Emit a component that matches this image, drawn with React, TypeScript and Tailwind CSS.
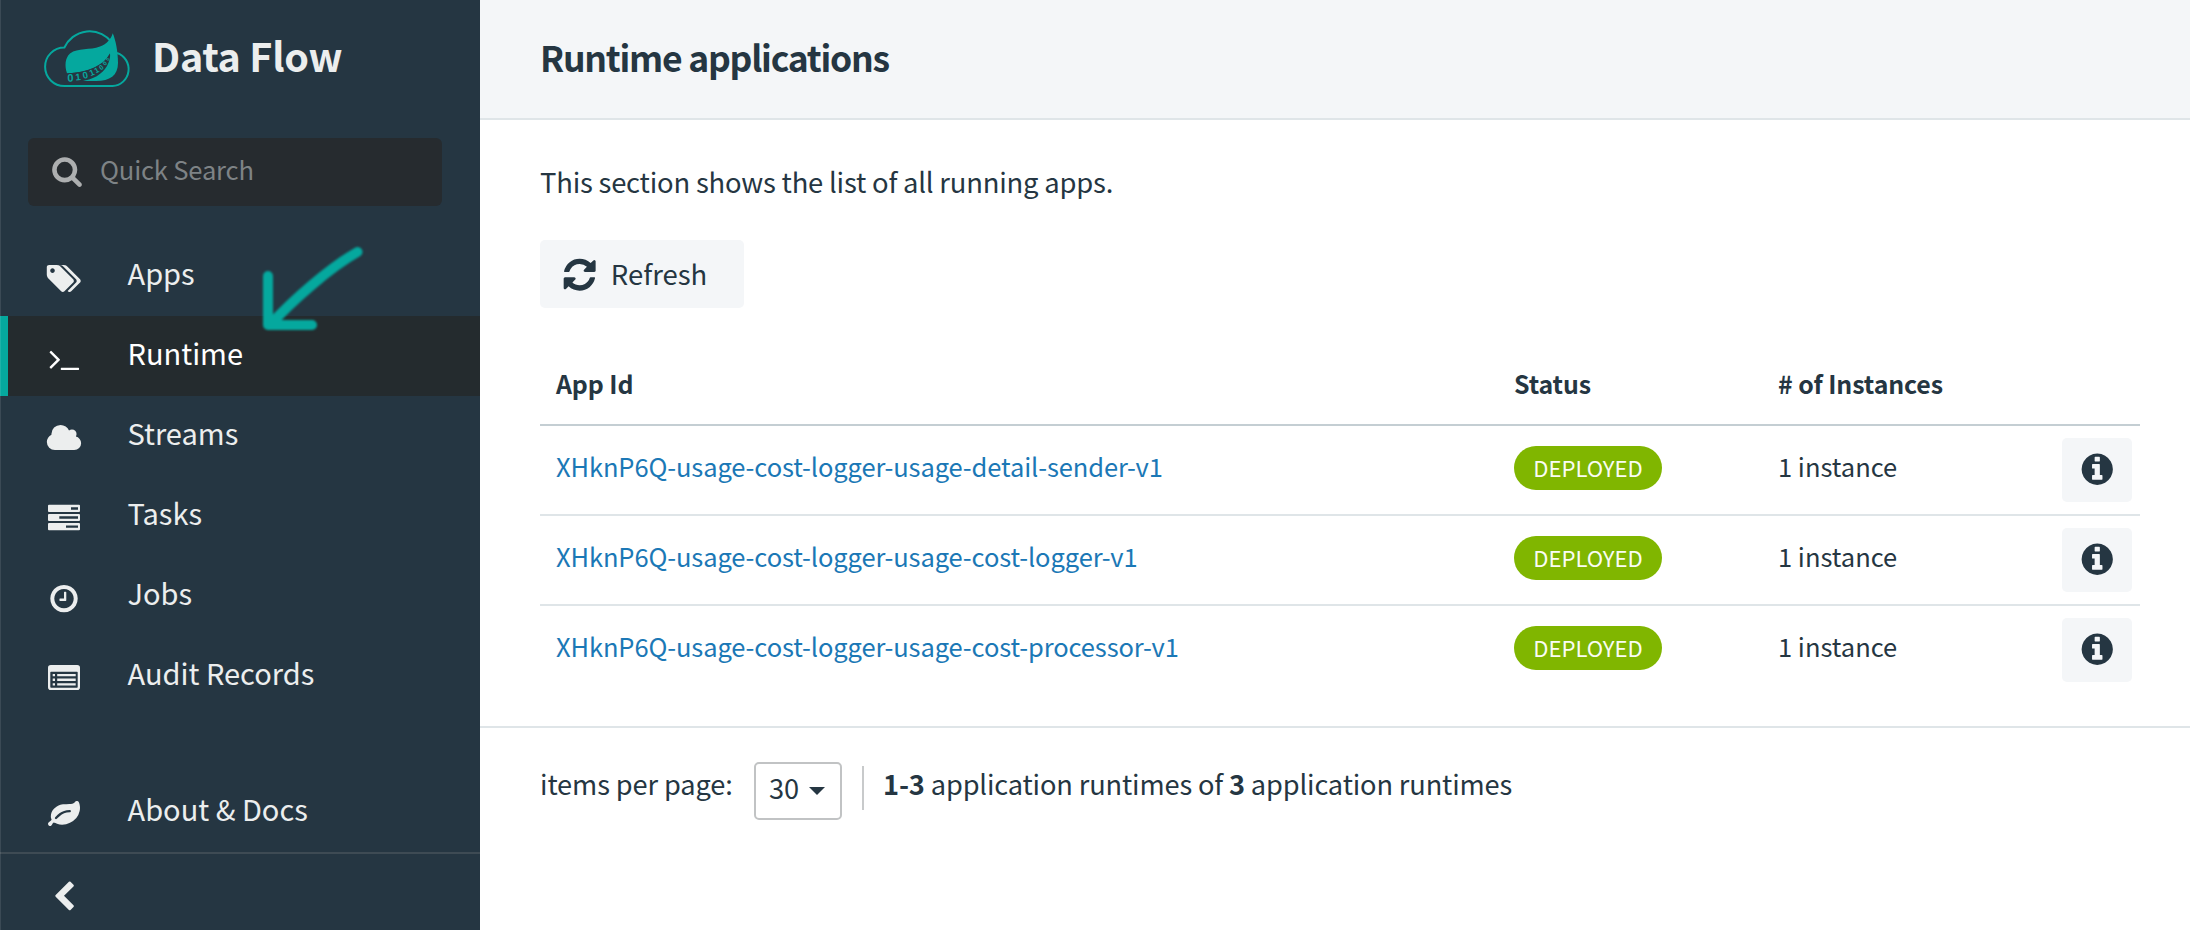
import type { ReactNode } from "react";

const TAGS =
  "M576 448q0-53-37.5-90.5t-90.5-37.5-90.5 37.5-37.5 90.5 37.5 90.5 90.5 37.5 90.5-37.5 37.5-90.5zm1067 576q0 53-37 90l-491 492q-39 37-91 37-53 0-90-37l-715-716q-38-37-64.5-101t-26.5-117v-416q0-52 38-90t90-38h416q53 0 117 26.5t102 64.5l715 714q37 39 37 91zm384 0q0 53-37 90l-491 492q-39 37-91 37-36 0-59-14t-53-45l470-470q37-37 37-90 0-52-37-91l-715-714q-38-38-102-64.5t-117-26.5h224q53 0 117 26.5t102 64.5l715 714q37 39 37 91z";
const TERMINAL =
  "M649 983l-466 466q-10 10-23 10t-23-10l-50-50q-10-10-10-23t10-23l393-393-393-393q-10-10-10-23t10-23l50-50q10-10 23-10t23 10l466 466q10 10 10 23t-10 23zm1079 457v64q0 14-9 23t-23 9h-960q-14 0-23-9t-9-23v-64q0-14 9-23t23-9h960q14 0 23 9t9 23z";
const CLOUD =
  "M1984 1152q0 159-112.5 271.5t-271.5 112.5h-1088q-185 0-316.5-131.5t-131.5-316.5q0-132 71-241.5t187-163.5q-2-28-2-43 0-212 150-362t362-150q158 0 286.5 88t187.5 230q70-62 166-62 106 0 181 75t75 181q0 75-41 138 129 30 213 134.5t84 239.5z";
const CLOCK =
  "M1024 544v448q0 14-9 23t-23 9h-320q-14 0-23-9t-9-23v-64q0-14 9-23t23-9h224v-352q0-14 9-23t23-9h64q14 0 23 9t9 23zm416 352q0-148-73-273t-198-198-273-73-273 73-198 198-73 273 73 273 198 198 273 73 273-73 198-198 73-273zm224 0q0 209-103 385.5t-279.5 279.5-385.5 103-385.5-103-279.5-279.5-103-385.5 103-385.5 279.5-279.5 385.5-103 385.5 103 279.5 279.5 103 385.5z";
const LEAF =
  "M1280 704q0-26-19-45t-45-19q-172 0-318 49.5t-259.5 134-235.5 219.5q-19 21-19 45 0 26 19 45t45 19q24 0 45-19 27-24 74-71t67-66q137-124 268.5-176t313.5-52q26 0 45-19t19-45zm512-198q0 95-20 193-46 224-184.5 383t-357.5 268q-214 108-438 108-148 0-286-47-15-5-88-42t-96-37q-16 0-39.5 32t-45 70-52.5 70-60 32q-43 0-63.5-17.5t-45.5-59.5q-2-4-6-11t-5.500-10-3-9.500-1.500-13.500q0-35 31-73.500t68-65.500 68-56 31-48q0-4-14-38t-16-44q-9-51-9-104 0-115 43.500-220t119-184.500 170.500-139 204-95.500q55-18 145-25.500t179.500-9 178.500-6 163.500-24 113.500-56.500l29.500-29.500 29.500-28 27-20 36.500-16 43.500-4.500q39 0 70.500 46t47.500 112 24 124 8 96z";
const CHEVRON_LEFT =
  "M1427 301l-531 531 531 531q19 19 19 45t-19 45l-166 166q-19 19-45 19t-45-19l-742-742q-19-19-19-45t19-45l742-742q19-19 45-19t45 19l166 166q19 19 19 45t-19 45z";
const SEARCH =
  "M1216 832q0-185-131.5-316.5t-316.5-131.5-316.5 131.5-131.5 316.5 131.5 316.5 316.5 131.5 316.5-131.5 131.5-316.5zm512 832q0 52-38 90t-90 38q-54 0-90-38l-343-342q-179 124-399 124-143 0-273.5-55.5t-225-150-150-225-55.5-273.5 55.5-273.5 150-225 225-150 273.5-55.5 273.5 55.5 225 150 150 225 55.5 273.5q0 220-124 399l343 343q37 37 37 90z";
const REFRESH =
  "M1639 1056q0 5-1 7-64 268-268 434.5t-478 166.5q-146 0-282.5-55t-243.5-157l-129 129q-19 19-45 19t-45-19-19-45v-448q0-26 19-45t45-19h448q26 0 45 19t19 45-19 45l-137 137q71 66 161 102t187 36q134 0 250-65t186-179q11-17 53-117 8-23 30-23h192q13 0 22.5 9.5t9.5 22.5zm25-800v448q0 26-19 45t-45 19h-448q-26 0-45-19t-19-45 19-45l138-138q-148-137-349-137-134 0-250 65t-186 179q-11 17-53 117-8 23-30 23h-199q-13 0-22.5-9.5t-9.5-22.5v-7q65-268 270-434.5t480-166.5q146 0 284 55.5t245 156.5l130-129q19-19 45-19t45 19 19 45z";
const INFO =
  "M1152 1376v-160q0-14-9-23t-23-9h-96v-512q0-14-9-23t-23-9h-320q-14 0-23 9t-9 23v160q0 14 9 23t23 9h96v320h-96q-14 0-23 9t-9 23v160q0 14 9 23t23 9h448q14 0 23-9t9-23zm-128-896v-160q0-14-9-23t-23-9h-192q-14 0-23 9t-9 23v160q0 14 9 23t23 9h192q14 0 23-9t9-23zm640 416q0 209-103 385.5t-279.5 279.5-385.5 103-385.5-103-279.5-279.5-103-385.5 103-385.5 279.5-279.5 385.5-103 385.5 103 279.5 279.5 103 385.5z";

function Glyph({ d, className }: { d: string; className: string }) {
  return (
    <svg viewBox="0 0 1792 1792" className={className} fill="currentColor">
      <path d={d} />
    </svg>
  );
}

function NavGlyph({ d, x }: { d: string; x: number }) {
  return <path d={d} transform={`translate(${x} 4.6) scale(0.017857)`} />;
}

const tasksIcon = (
  <path
    fillRule="evenodd"
    d="M7 6.7h30q1 0 1 1v5.3q0 1-1 1H7q-1 0-1-1V7.700q0-1 1-1zM29 9.200v2.500h7V9.200zM7 15.900h30q1 0 1 1v5.200q0 1-1 1H7q-1 0-1-1v-5.200q0-1 1-1zM17.300 18.300v2.400H36v-2.400zM7 25.100h30q1 0 1 1v5.200q0 1-1 1H7q-1 0-1-1v-5.200q0-1 1-1zM24 27.400v2.400h12v-2.400z"
  />
);

const listIcon = (
  <path
    fillRule="evenodd"
    d="M8.800 7h26.400q2.800 0 2.800 2.800v19.400q0 2.800-2.800 2.800H8.800Q6 32 6 29.200V9.800Q6 7 8.800 7zM9 13.700q-.7 0-.7.7v14.700q0 .7.7.7h26q.7 0 .7-.7V14.400q0-.7-.7-.7zM10.700 16H13v2.300h-2.300zM15.200 16H33.700v2.300H15.200zM10.700 20.600H13v2.300h-2.300zM15.200 20.600H33.700v2.300H15.200zM10.700 25.200H13v2.300h-2.300zM15.200 25.200H33.700v2.300H15.200z"
  />
);

function NavItem({ label, icon, active = false }: { label: string; icon: ReactNode; active?: boolean }) {
  return (
    <a
      className={
        active
          ? "flex h-20 items-center border-l-8 border-[#05a89e] bg-[#242b2e] pl-[34px] text-white"
          : "flex h-20 items-center pl-[42px] text-[#eceeee]"
      }
    >
      <svg viewBox="0 0 44 40" className="mt-1 h-10 w-11" fill="currentColor">
        {icon}
      </svg>
      <span className="ml-[41.500px] pb-[8px] text-[29px] leading-10">{label}</span>
    </a>
  );
}

const digits: [string, number, number, number, number][] = [
  ["0", 34.4, 61.7, 11, -2],
  ["1", 42, 60.2, 9.5, -6],
  ["0", 49.3, 58.4, 9.5, -14],
  ["1", 56, 55.6, 8.5, -22],
  ["1", 60.8, 52.8, 7.5, -28],
  ["0", 65.3, 49.8, 7, -38],
  ["0", 68.9, 45.4, 6, -48],
  ["0", 71.6, 40.8, 5, -56],
];

function Logo() {
  return (
    <svg viewBox="0 0 104 76" className="h-[76px] w-[104px]">
      <path
        d="M76 22.500A27.800 27.800 0 0 0 28.400 27.500A19.300 19.300 0 0 0 28.400 66.100H76.500A17 17 0 0 0 81 33"
        fill="none"
        stroke="#05a89e"
        strokeWidth="2"
      />
      <path
        d="M76.700 13.200C79.500 19.500 82 31 82 43C82 55.500 74 61 60 61H46C56 58 66 51.500 70.500 44C73 39.500 73.900 36.200 74 33.600C69 43.500 57 52.500 31 53.300C28.500 46 29 38 34 33.600C42 27.500 54 30.500 64 26.600C71 23.800 75 19 76.700 13.200Z"
        fill="#05a89e"
      />
      <path d="M74 33.600C67 46 53 52 31 53.600L46 61C57 59.500 66 54.500 71 46C73.500 41.500 74.500 37 74 33.600Z" fill="#253642" />
      {digits.map(([t, x, y, size, angle], i) => (
        <text
          key={i}
          x={x}
          y={y}
          fontSize={size}
          transform={`rotate(${angle} ${x} ${y - size / 3})`}
          textAnchor="middle"
          fill="#05a89e"
          className="font-['Liberation_Sans',sans-serif] font-bold"
        >
          {t}
        </text>
      ))}
    </svg>
  );
}

function Sidebar() {
  return (
    <aside className="relative flex h-full w-[480px] shrink-0 flex-col bg-[#253642]">
      <div className="flex h-[138px] items-start pt-5 pl-9">
        <Logo />
        <span className="ml-3 pt-[5px] text-[39.500px] leading-[60px] font-bold tracking-[-0.300px] text-[#eceeee]">
          Data Flow
        </span>
      </div>
      <div className="ml-7 flex h-[68px] w-[414px] items-center rounded-md bg-[#262b2f] pl-[23px]">
        <Glyph d={SEARCH} className="-mt-[2px] size-8 text-[#adafb0]" />
        <span className="ml-[17px] pb-[6px] text-[25.600px] leading-8 tracking-[-0.200px] text-[#7e8386]">Quick Search</span>
      </div>
      <nav className="mt-[30px] flex flex-col">
        <NavItem label="Apps" icon={<NavGlyph d={TAGS} x={2.5} />} />
        <NavItem label="Runtime" active icon={<NavGlyph d={TERMINAL} x={6.2} />} />
        <NavItem label="Streams" icon={<NavGlyph d={CLOUD} x={3.7} />} />
        <NavItem label="Tasks" icon={tasksIcon} />
        <NavItem label="Jobs" icon={<NavGlyph d={CLOCK} x={6} />} />
        <NavItem label="Audit Records" icon={listIcon} />
        <div className="h-14" />
        <NavItem label="About & Docs" icon={<NavGlyph d={LEAF} x={6} />} />
      </nav>
      <div className="flex flex-1 items-center border-t-2 border-[#3e4b54] pl-12 text-[#eceeee]">
        <Glyph d={CHEVRON_LEFT} className="mt-[9px] size-8" />
      </div>
      <div className="absolute inset-y-0 left-0 w-px bg-white/10" />
      <svg
        viewBox="0 0 120 100"
        className="absolute top-[240px] left-[255px] h-[100px] w-[120px] blur-[1px]"
        fill="none"
        stroke="#05a89e"
        strokeWidth="10"
        strokeLinecap="round"
        strokeLinejoin="round"
      >
        <path d="M102.500 12C74 28 36 62 15 85" />
        <path d="M13 36V85H57" />
      </svg>
    </aside>
  );
}

const apps = [
  "XHknP6Q-usage-cost-logger-usage-detail-sender-v1",
  "XHknP6Q-usage-cost-logger-usage-cost-logger-v1",
  "XHknP6Q-usage-cost-logger-usage-cost-processor-v1",
];

function AppsTable() {
  return (
    <div className="mt-[38px] flex w-[1600px] flex-col">
      <div className="flex h-20 items-center border-b-2 border-[#c4ced3] pb-[2px] pl-4 text-[24.900px] font-bold tracking-[-0.100px]">
        <span className="w-[958px]">App Id</span>
        <span className="w-[264px]">Status</span>
        <span>
          # of Instances
        </span>
      </div>
      {apps.map((id, i) => (
        <div
          key={id}
          className={
            i < apps.length - 1
              ? "flex h-[90px] items-center border-b-2 border-[#dfe5e8] pl-4 text-[25.500px]"
              : "flex h-[90px] items-center border-b-2 border-transparent pl-4 text-[25.500px]"
          }
        >
          <a className="w-[958px] pb-[9px] leading-9 tracking-[-0.110px] text-[#1b78b6]">{id}</a>
          <div className="w-[264px] pb-1">
            <span className="flex h-11 w-[148px] items-center justify-center rounded-full bg-[#80b600] pb-[3px] text-[22.100px] leading-8 text-[#fafcf4]">
              DEPLOYED
            </span>
          </div>
          <span className="w-[284px] pb-[9px] leading-9">1 instance</span>
          <button className="flex h-16 w-[70px] items-center justify-center rounded-[5px] bg-[#f4f6f8] pb-[2px]">
            <Glyph d={INFO} className="size-[36.500px]" />
          </button>
        </div>
      ))}
    </div>
  );
}

function Pagination() {
  return (
    <footer className="flex items-start border-t-2 border-[#dfe5e8] pt-[34px] pl-[60px] text-[27.200px] leading-10">
      <span className="w-[193px] pt-px tracking-[-0.100px]">items per page:</span>
      <div className="ml-[21px] flex h-[58px] w-[88px] items-center rounded-[5px] border-2 border-[#c1c3c4] pb-[9px] pl-[13px]">
        30
        <svg viewBox="0 0 16 8" className="mt-[9px] ml-[10px] h-2 w-4" fill="currentColor">
          <path d="M0 0H16L8 8Z" />
        </svg>
      </div>
      <div className="mt-1 ml-5 h-11 w-0.5 bg-[#c8cacb]" />
      <span className="ml-[19px] pt-px tracking-[-0.130px]">
        <b>1-3</b> application runtimes of <b>3</b> application runtimes
      </span>
    </footer>
  );
}

export default function App() {
  return (
    <div className="flex h-[930px] w-[2190px] overflow-hidden bg-white font-['Noto_Sans_CJK_JP','Noto_Sans',sans-serif] whitespace-nowrap text-[#253642]">
      <Sidebar />
      <main className="flex flex-1 flex-col">
        <header className="flex h-[120px] items-center border-b-2 border-[#dfe5e8] bg-[#f4f6f8] pb-[5px] pl-[60px]">
          <h1 className="text-[35.500px] leading-[48px] font-bold tracking-[-1.250px]">Runtime applications</h1>
        </header>
        <div className="flex h-[606px] flex-col items-start pl-[60px]">
          <p className="mt-[41px] text-[27.400px] leading-10 tracking-[-0.200px]">This section shows the list of all running apps.</p>
          <button className="mt-[39px] flex h-[68px] w-[204px] items-center rounded-[5px] bg-[#f4f6f8] pl-[21px]">
            <Glyph d={REFRESH} className="mt-[2px] size-[37.300px]" />
            <span className="ml-[12.500px] pb-[3px] text-[27.500px] leading-10">Refresh</span>
          </button>
          <AppsTable />
        </div>
        <Pagination />
      </main>
    </div>
  );
}
